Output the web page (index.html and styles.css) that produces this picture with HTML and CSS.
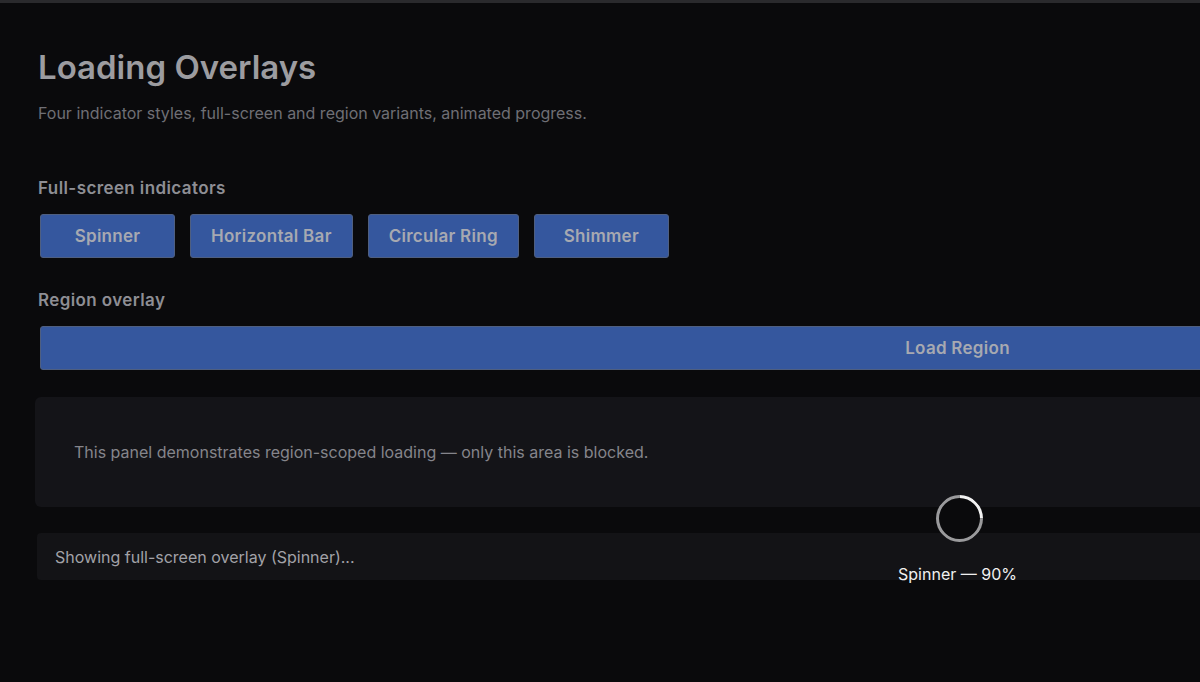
FILE: index.html
```html
<!DOCTYPE html>
<html lang="en">
<head>
<meta charset="utf-8">
<title>Loading Overlays</title>
<link rel="stylesheet" href="styles.css">
</head>
<body>
<div class="topbar"></div>
<div class="page">
  <main class="content">
    <h1 class="title">Loading Overlays</h1>
    <p class="subtitle">Four indicator styles, full-screen and region variants, animated progress.</p>

    <h2 class="section-label">Full-screen indicators</h2>
    <div class="btn-row">
      <button class="btn">Spinner</button>
      <button class="btn">Horizontal Bar</button>
      <button class="btn">Circular Ring</button>
      <button class="btn">Shimmer</button>
    </div>

    <h2 class="section-label region-label">Region overlay</h2>
    <button class="btn btn-wide">Load Region</button>

    <section class="region-panel">
      <p>This panel demonstrates region-scoped loading — only this area is blocked.</p>
    </section>

    <div class="status">Showing full-screen overlay (Spinner)...</div>
  </main>

  <div class="overlay">
    <div class="spinner"></div>
    <div class="overlay-label">Spinner — 90%</div>
  </div>
</div>
</body>
</html>
```

FILE: styles.css
```css
html, body {
  margin: 0;
  padding: 0;
  background: #0a0a0c;
  overflow: hidden;
  height: 100%;
}
body {
  font-family: Inter, "Noto Sans", sans-serif;
  color: #9a9aa0;
}
.topbar {
  height: 3px;
  background: #2a2a2d;
}
.page {
  position: relative;
  width: 1918px;
}
.content {
  padding: 44px 44px 0 35px;
}
.title {
  margin: 0 0 0 3px;
  font-size: 33px;
  font-weight: 600;
  color: #9c9ca0;
  line-height: 40px;
}
.subtitle {
  margin: 16px 0 0 3px;
  font-size: 16px;
  color: #6f6f75;
  line-height: 20px;
}
.section-label {
  margin: 55px 0 0 3px;
  font-size: 17px;
  font-weight: 600;
  letter-spacing: 0.4px;
  color: #8e8e94;
  line-height: 20px;
}
.region-label {
  margin-top: 32px;
}
.btn-row {
  display: flex;
  gap: 15px;
  margin: 16px 0 0 5px;
}
.btn {
  font-family: Inter, "Noto Sans", sans-serif;
  font-size: 17px;
  font-weight: 600;
  letter-spacing: 0.28px;
  color: #a7a9b1;
  background: #35579e;
  border: 1px solid #4f5f80;
  border-radius: 3px;
  height: 44px;
  min-width: 135px;
  padding: 0 20px;
  cursor: pointer;
}
.btn-wide {
  display: block;
  width: 1835px;
  margin: 16px 0 0 5px;
}
.region-panel {
  margin-top: 27px;
  height: 110px;
  background: #141418;
  border-radius: 6px;
  display: flex;
  align-items: center;
  padding: 0 39px;
}
.region-panel p {
  margin: 0;
  font-size: 16px;
  color: #85858b;
}
.status {
  margin: 26px 0 0 2px;
  height: 47px;
  background: #131316;
  border-radius: 4px;
  display: flex;
  align-items: center;
  padding: 0 18px;
  font-size: 16px;
  color: #a2a2a8;
}
.overlay {
  position: absolute;
  left: 0;
  right: 0;
  top: 492px;
  display: flex;
  flex-direction: column;
  align-items: center;
}
.spinner {
  width: 41px;
  height: 41px;
  border-radius: 50%;
  border: 3px solid #9a9a9c;
  border-top-color: #f2f2f2;
  background: #0a0a0c;
  transform: rotate(45deg);
}
.overlay-label {
  margin-top: 22px;
  font-size: 16px;
  color: #f0f0f0;
  margin-left: -3px;
}
```
